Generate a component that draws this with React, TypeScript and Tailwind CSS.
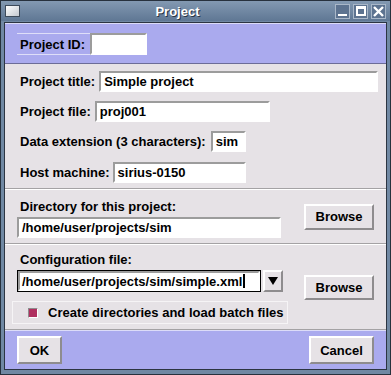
import React from 'react';

const FONT = "font-['Liberation_Sans',Arial,sans-serif] font-bold text-[13px] leading-[15px] text-black";

function Entry({ value, className = '' }: { value: string; className?: string }) {
  return (
    <div
      className={`flex h-[21px] items-center overflow-hidden whitespace-nowrap border-2 border-t-[#9c9c9c] border-l-[#9c9c9c] border-b-white border-r-white bg-white pl-[3px] ${className}`}
    >
      {value}
    </div>
  );
}

function Button({ label, className = '' }: { label: string; className?: string }) {
  return (
    <div
      className={`flex items-center justify-center border-2 border-t-white border-l-white border-b-[#8e8c8e] border-r-[#8e8c8e] bg-[#e6e2e6] ${className}`}
    >
      {label}
    </div>
  );
}

function TitleButton({ children }: { children: React.ReactNode }) {
  return (
    <div className="flex h-[15px] w-[15px] items-center justify-center border border-[#a9b7c8] bg-[#5d7390]">
      {children}
    </div>
  );
}

export default function App() {
  return (
    <div className={`flex h-[375px] w-[391px] flex-col border border-[#27313d] bg-[#7088a3] ${FONT}`}>
      {/* title bar */}
      <div className="flex h-[20px] items-center bg-gradient-to-b from-[#8399b2] to-[#5f7794] pl-[4px] pr-[4px]">
        <div className="h-[12px] w-[15px] border border-[#3d4a5a] bg-gradient-to-br from-white to-[#c4c9d0]" />
        <div className="flex-1 text-center text-[13px] text-white [text-shadow:1px_1px_0_#2a3545]">Project</div>
        <div className="flex gap-[3px]">
          <TitleButton>
            <div className="mt-[8px] h-[2px] w-[9px] bg-white" />
          </TitleButton>
          <TitleButton>
            <div className="h-[10px] w-[10px] border-2 border-white border-t-[3px]" />
          </TitleButton>
          <TitleButton>
            <svg width="11" height="11" viewBox="0 0 11 11">
              <path d="M1 1 L10 10 M10 1 L1 10" stroke="white" strokeWidth="2.4" />
            </svg>
          </TitleButton>
        </div>
      </div>

      {/* content */}
      <div className="mx-[3px] mb-[4px] mt-[1px] flex flex-1 flex-col border border-[#2c3542] bg-[#e6e2e6]">
        {/* project id */}
        <div className="flex h-[41px] items-start border-t border-t-[#dcdcf8] border-b border-b-[#6c6c98] bg-[#aaaaee] pl-[12px] pt-[9px]">
          <div className="flex h-[22px] items-center border-y border-[#dedef8] px-[3px] pr-[5px]">Project ID:</div>
          <Entry value="" className="h-[22px] w-[57px]" />
        </div>

        {/* basic fields */}
        <div className="flex h-[125px] flex-col gap-[9px] border-b border-b-[#a4a2a4] pl-[15px] pt-[7px]">
          <div className="flex items-center">
            <span>Project title:</span>
            <Entry value="Simple project" className="ml-[4px] w-[279px]" />
          </div>
          <div className="flex items-center">
            <span>Project file:</span>
            <Entry value="proj001" className="ml-[4px] w-[175px]" />
          </div>
          <div className="flex items-center">
            <span>Data extension (3 characters):</span>
            <Entry value="sim" className="ml-[5px] w-[35px]" />
          </div>
          <div className="mt-[1px] flex items-center">
            <span>Host machine:</span>
            <Entry value="sirius-0150" className="ml-[3px] w-[133px]" />
          </div>
        </div>

        {/* directory */}
        <div className="flex h-[55px] items-center justify-between border-t border-t-white border-b border-b-[#a4a2a4] pl-[12px] pr-[12px]">
          <div className="flex flex-col pt-[9px] pb-[6px]">
            <span className="pl-[3px]">Directory for this project:</span>
            <Entry value="/home/user/projects/sim" className="mt-[3px] h-[20px] w-[264px]" />
          </div>
          <Button label="Browse" className="h-[26px] w-[70px]" />
        </div>

        {/* configuration */}
        <div className="flex h-[86px] items-center justify-between border-t border-t-white border-b border-b-[#a4a2a4] pl-[7px] pr-[12px]">
          <div className="flex flex-col pt-[7px] pb-[5px]">
            <span className="pl-[8px]">Configuration file:</span>
            <div className="mt-[3px] flex pl-[5px]">
              <div className="flex h-[22px] w-[244px] items-center border border-black">
                <div className="flex h-full w-full items-center border-2 border-t-[#9c9c9c] border-l-[#9c9c9c] border-b-white border-r-white bg-white pl-[2px]">
                  /home/user/projects/sim/simple.xml
                  <span className="ml-[1px] h-[14px] w-[2px] bg-black" />
                </div>
              </div>
              <div className="ml-[2px] flex h-[22px] w-[20px] items-center justify-center border-2 border-t-white border-l-white border-b-[#8e8c8e] border-r-[#8e8c8e]">
                <svg width="10" height="8" viewBox="0 0 10 8">
                  <path d="M0 0 H10 L5 8 Z" fill="black" />
                </svg>
              </div>
            </div>
            <div className="mt-[9px] flex h-[23px] w-[276px] items-center border border-[#f6f4f6] pl-[15px]">
              <span className="h-[10px] w-[10px] border border-t-[#8e8c8e] border-l-[#8e8c8e] border-b-white border-r-white bg-[#b03060]" />
              <span className="ml-[10px]">Create directories and load batch files</span>
            </div>
          </div>
          <Button label="Browse" className="h-[25px] w-[70px]" />
        </div>

        {/* buttons */}
        <div className="flex flex-1 items-center justify-between border-t border-t-[#dcdcf8] bg-[#aaaaee] pl-[12px] pr-[12px]">
          <Button label="OK" className="h-[28px] w-[45px]" />
          <Button label="Cancel" className="h-[28px] w-[65px]" />
        </div>
      </div>
    </div>
  );
}
